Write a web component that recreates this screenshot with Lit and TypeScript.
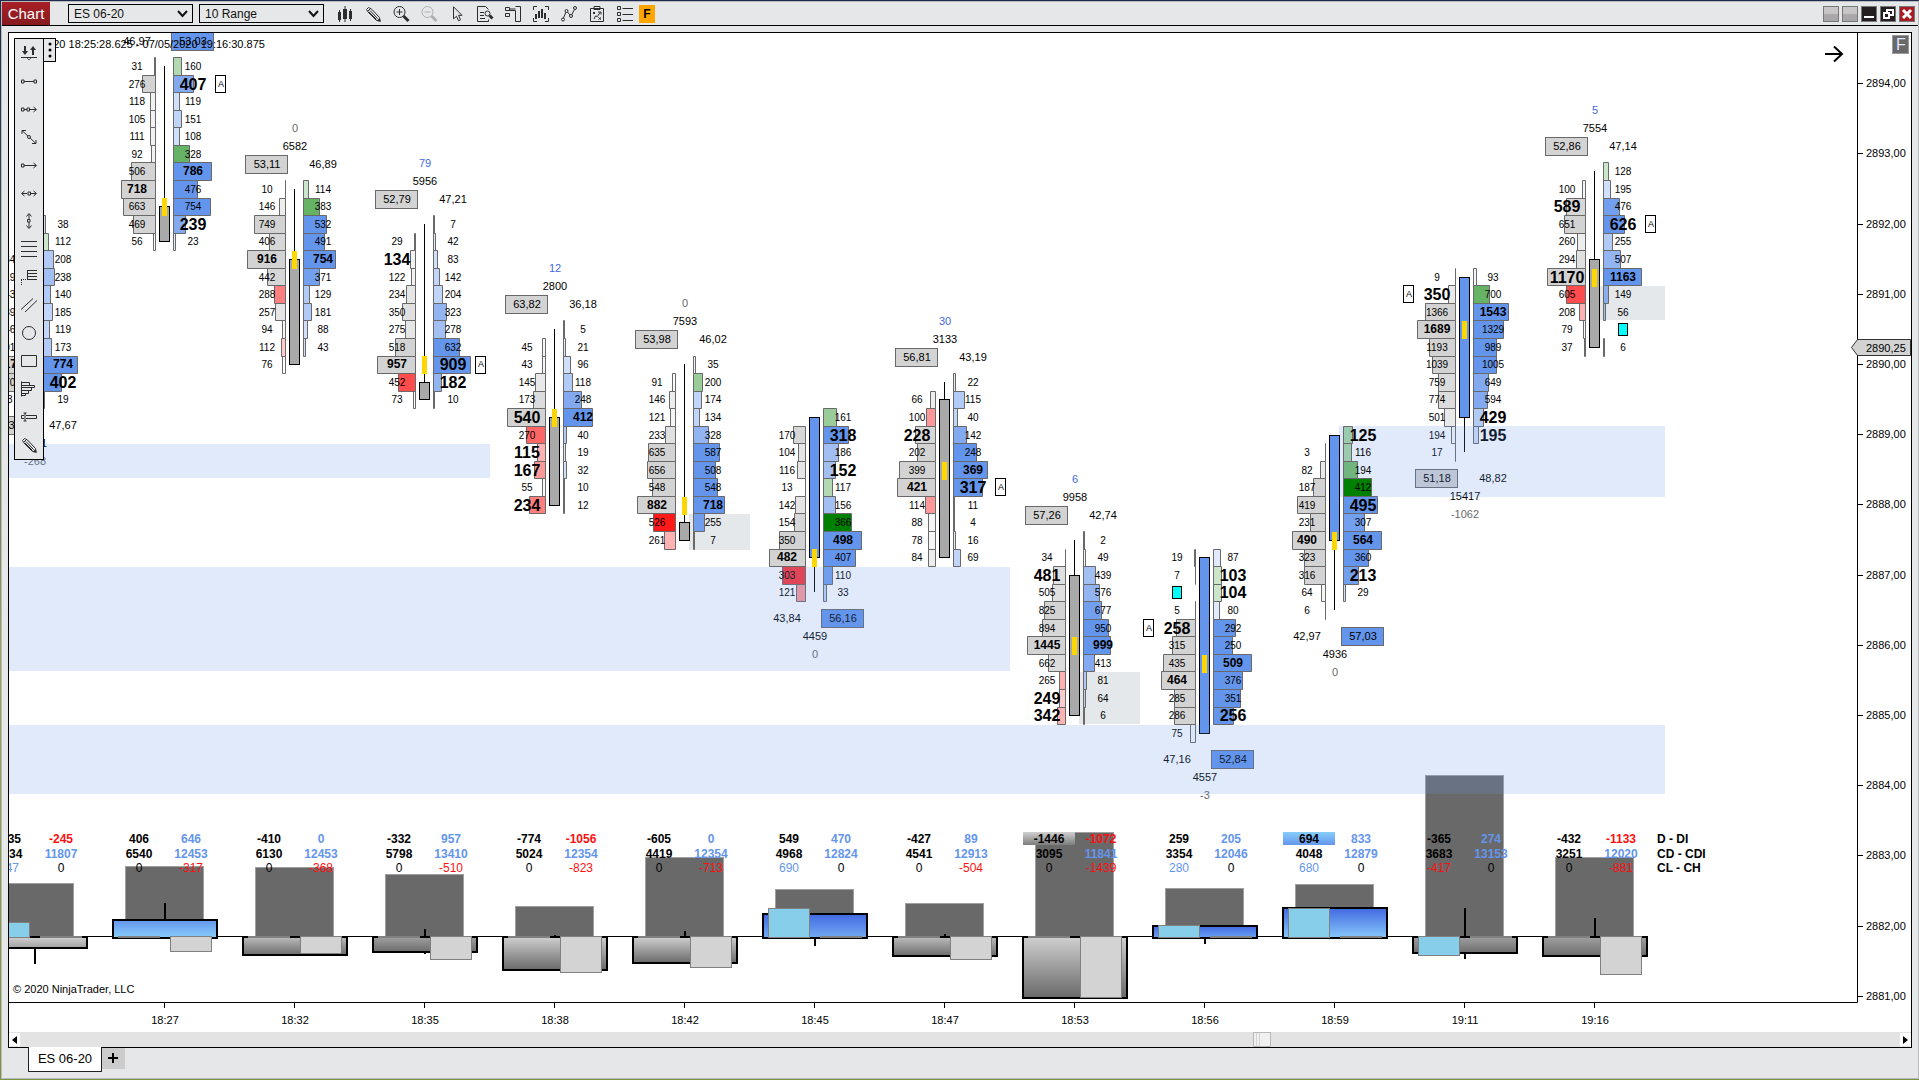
import { LitElement, html, svg, css } from "lit";
import { customElement } from "lit/decorators.js";

type Pair = [string, string];

interface Bar {
  time: string;
  x: number;
  /** tick index of the first row, counted down from 2894,00 */
  top: number;
  up: boolean;
  rows: string[];
  body: [number, number];
  wick: [number, number];
  poc: number;
  share: Pair;
  dominant: "L" | "R";
  volume: number;
  running: number;
  flag?: ["L" | "R", number];
  delta: Pair;
  cumulative: Pair;
  extremes: Pair;
  edge: number;
  tone: string;
  low: number;
  high: number;
  spikes: [number, number][];
  lit?: string;
}

const TICK = 17.55;
const ORIGIN = 83.5;
const ZERO = 936;
const tickY = (k: number) => Math.round(ORIGIN + k * TICK);
const rowTop = (k: number) => Math.round(ORIGIN + (k - 0.5) * TICK);

// Row cells: value, weight (B large, M medium), tint (g grey, r red, b blue, G green), strength 0-9 or x.
const BARS: Bar[] = [
  {
    time: "", x: 34, top: 8, up: true,
    rows: ["-|38b3", "-|112G2", "164g3|208b5", "219g4|238b6", "143g3|140b5", "189g4|185b4", "146g3|119b4", "101g2|173b5", "717Mgx|774Mbx", "870gx|402Bbx", "53g0|19b2"],
    body: [10, 17], wick: [8, 18], poc: 16, share: ["52,33", "47,67"], dominant: "L", volume: 5051, running: -268,
    delta: ["-235", "-245"], cumulative: ["6134", "11807"], extremes: ["147", "0"],
    edge: 949, tone: "n3", low: 922, high: 0, spikes: [[948, 964]],
  },
  {
    time: "18:27", x: 164, top: -1, up: false,
    rows: ["31g0|160G3", "276gx|407Bb8", "118g3|119b3", "105g3|151b4", "111g3|108b3", "92g3|328G6", "506gx|786Mbx", "718Mgx|476bx", "663gx|754bx", "469gx|239Bb8", "56g0|23b2"],
    body: [7, 9], wick: [-1, 7], poc: 7, share: ["46,97", "53,03"], dominant: "R", volume: 6696, running: 0,
    flag: ["R", 0], delta: ["406", "646"], cumulative: ["6540", "12453"], extremes: ["0", "-317"],
    edge: 919, tone: "p1", low: 0, high: 952, spikes: [[903, 920]],
  },
  {
    time: "18:32", x: 294, top: 6, up: false,
    rows: ["10g0|114G2", "146g4|383G6", "749gx|532bx", "406g9|491bx", "916Mgx|754Mbx", "442g9|371b9", "288r5|129b5", "257g6|181b5", "94g2|88b3", "112r2|43b3", "76g0|-"],
    body: [10, 16], wick: [6, 10], poc: 10, share: ["53,11", "46,89"], dominant: "L", volume: 6582, running: 0,
    delta: ["-410", "0"], cumulative: ["6130", "12453"], extremes: ["0", "-368"],
    edge: 956, tone: "n2", low: 0, high: 954, spikes: [],
  },
  {
    time: "18:35", x: 424, top: 8, up: false,
    rows: ["-|7b1", "29g0|42b2", "134Bg3|83b3", "122g3|142b4", "234g6|204b4", "350g7|323b7", "275g6|278b6", "518gx|632bx", "957Mgx|909Bbx", "452r7|182Bb7", "73g0|10b1"],
    body: [17, 18], wick: [8, 17], poc: 16, share: ["52,79", "47,21"], dominant: "L", volume: 5956, running: 79,
    flag: ["R", 16], delta: ["-332", "957"], cumulative: ["5798", "13410"], extremes: ["0", "-510"],
    edge: 953, tone: "n1", low: 0, high: 960, spikes: [[929, 937], [950, 954]],
  },
  {
    time: "18:38", x: 554, top: 14, up: false,
    rows: ["-|5b1", "45g2|21b2", "43g2|96b3", "145g5|118b5", "173g8|248b8", "540Bgx|412Mbx", "270r6|40b5", "115Br3|19b2", "167Br4|32b3", "55g1|10b1", "234Br5|12b1"],
    body: [19, 24], wick: [14, 19], poc: 19, share: ["63,82", "36,18"], dominant: "L", volume: 2800, running: 12,
    delta: ["-774", "-1056"], cumulative: ["5024", "12354"], extremes: ["0", "-823"],
    edge: 971, tone: "n0", low: 0, high: 973, spikes: [[935, 938]],
  },
  {
    time: "18:42", x: 684, top: 16, up: false,
    rows: ["-|35b1", "91g1|200G4", "146g4|174b4", "121g2|134b4", "233g7|328b7", "635gx|587bx", "656gx|508bx", "548gx|548bx", "882Mgx|718Mbx", "526r9|255b9", "261r3|7b1"],
    body: [25, 26], wick: [16, 25], poc: 24, share: ["53,98", "46,02"], dominant: "L", volume: 7593, running: 0,
    delta: ["-605", "0"], cumulative: ["4419", "12354"], extremes: ["0", "-713"],
    edge: 964, tone: "n0", low: 0, high: 968, spikes: [[931, 938]],
  },
  {
    time: "18:45", x: 814, top: 19, up: true,
    rows: ["-|161G4", "170g9|318Bbx", "104g6|186b6", "116g6|152Bb6", "13g0|117G3", "142g6|156b6", "154g9|366Gx", "350gx|498Mbx", "482Mgx|407bx", "303r8|110b9", "121r4|33b4"],
    body: [19, 27], wick: [27, 29], poc: 27, share: ["43,84", "56,16"], dominant: "R", volume: 4459, running: 0,
    delta: ["549", "470"], cumulative: ["4968", "12824"], extremes: ["690", "0"],
    edge: 913, tone: "p2", low: 908, high: 0, spikes: [[938, 946]],
  },
  {
    time: "18:47", x: 944, top: 17, up: false,
    rows: ["-|22b2", "66g4|115b5", "100r4|40b4", "228Bg9|142b8", "202gx|248bx", "399gx|369Mbx", "421Mgx|317Bbx", "114r4|11b1", "88g2|4b1", "78g2|16b2", "84g4|69b4"],
    body: [18, 27], wick: [17, 18], poc: 22, share: ["56,81", "43,19"], dominant: "L", volume: 3133, running: 30,
    flag: ["R", 23], delta: ["-427", "89"], cumulative: ["4541", "12913"], extremes: ["0", "-504"],
    edge: 957, tone: "n2", low: 0, high: 960, spikes: [[934, 938]],
  },
  {
    time: "18:53", x: 1074, top: 26, up: false,
    rows: ["-|2b1", "34g0|49b1", "481Bg7|439b6", "505g7|576b7", "825gx|677b9", "894g9|950bx", "1445Mgx|999Mbx", "662g8|413b8", "265r3|81b4", "249Br2|64b3", "342Br3|6b1"],
    body: [28, 36], wick: [26, 28], poc: 32, share: ["57,26", "42,74"], dominant: "L", volume: 9958, running: 6,
    delta: ["-1446", "-1072"], cumulative: ["3095", "11841"], extremes: ["0", "-1439"],
    edge: 999, tone: "n0", low: 0, high: 998, spikes: [], lit: "litDown",
  },
  {
    time: "18:56", x: 1204, top: 27, up: true,
    rows: ["19g0|87b2", "7g0|103BG2", "*|104BG2", "5g0|80b2", "258Bgx|292bx", "315gx|250bx", "435gx|509Mbx", "464Mgx|376bx", "285gx|351bx", "286gx|256Bbx", "75g1|-"],
    body: [27, 37], wick: [27, 37], poc: 33, share: ["47,16", "52,84"], dominant: "R", volume: 4557, running: -3,
    flag: ["L", 31], delta: ["259", "205"], cumulative: ["3354", "12046"], extremes: ["280", "0"],
    edge: 925, tone: "p3", low: 925, high: 0, spikes: [[938, 944]],
  },
  {
    time: "18:59", x: 1334, top: 20, up: true,
    rows: ["-|125BG3", "3g0|116G3", "82g5|194G5", "187gx|412Gx", "419gx|495Bbx", "231gx|307b9", "490Mgx|564Mbx", "323gx|360bx", "316gx|213Bb9", "64g2|29b3", "6g0|-"],
    body: [20, 26], wick: [26, 30], poc: 26, share: ["42,97", "57,03"], dominant: "R", volume: 4936, running: 0,
    delta: ["694", "833"], cumulative: ["4048", "12879"], extremes: ["680", "0"],
    edge: 907, tone: "p4", low: 908, high: 0, spikes: [], lit: "litUp",
  },
  {
    time: "19:11", x: 1464, top: 11, up: true,
    rows: ["9g0|93b1", "350Bg5|700G6", "1366gx|1543Mbx", "1689Mgx|1329bx", "1193gx|989bx", "1039gx|1005bx", "759g8|649b8", "774g8|594b8", "501g5|429Bb5", "194g1|195Bb3", "17g0|-"],
    body: [11, 19], wick: [19, 21], poc: 14, share: ["51,18", "48,82"], dominant: "L", volume: 15417, running: -1062,
    flag: ["L", 12], delta: ["-365", "274"], cumulative: ["3683", "13153"], extremes: ["-417", "0"],
    edge: 954, tone: "n1", low: 956, high: 0, spikes: [[908, 938], [952, 959]],
  },
  {
    time: "19:16", x: 1594, top: 5, up: false,
    rows: ["-|128G2", "100g2|195b3", "589Bg9|476b9", "651gx|626Bbx", "260g4|255b5", "294g7|507b7", "1170Bgx|1163Mbx", "605r7|149b7", "208r3|56b5", "79g1|*", "37g0|6b1"],
    body: [10, 15], wick: [5, 10], poc: 11, share: ["52,86", "47,14"], dominant: "L", volume: 7554, running: 5,
    flag: ["R", 8], delta: ["-432", "-1133"], cumulative: ["3251", "12020"], extremes: ["0", "-881"],
    edge: 957, tone: "n1", low: 0, high: 975, spikes: [[918, 938]],
  },
];

const PRICES = Array.from({ length: 14 }, (_, i) => 2894 - i);

const GRADIENTS: [string, string, string][] = [
  ["p1", "#6495ed", "#87cefa"],
  ["p2", "#4169e1", "#72abf3"],
  ["p3", "#4169e1", "#6aa2f2"],
  ["p4", "#4169e1", "#87c8fa"],
  ["n0", "#cfcfcf", "#696969"],
  ["n1", "#a0a0a0", "#6c6c6c"],
  ["n2", "#bcbcbc", "#6c6c6c"],
  ["n3", "#d0d0d0", "#a0a0a0"],
  ["litDown", "#d0d0d0", "#7c7c7c"],
  ["litUp", "#87cefa", "#6495ed"],
];

const TINTS: Record<string, string> = { g: "#d3d3d3", r: "#ff0000", b: "#6495ed", G: "#008000" };

const cell = (b: Bar, side: "L" | "R", token: string, k: number, max: number) => {
  const cx = b.x + (side === "L" ? -27 : 29);
  const mid = tickY(k);
  if (token === "-") return svg``;
  if (token === "*") return svg`<rect class="cyan" x=${cx - 4.5} y=${mid - 5.5} width="9" height="12"/>`;
  const [, num, weight, tint, level] = /^(\d+)([BM]?)([grbG])([\dx])$/.exec(token)!;
  const raw = (Number(num) / max) * 38;
  const x0 = side === "L" ? b.x - 8.5 : b.x + 9.5;
  const x1 = side === "L" ? x0 - Math.floor(raw) : x0 + Math.ceil(raw);
  const y0 = rowTop(k) + 0.5;
  const y1 = rowTop(k + 1) + 0.5;
  const alpha = level === "x" ? 1 : Number(level) / 10;
  return svg`<path class="cell" fill=${TINTS[tint]} fill-opacity=${alpha} d="M${x0} ${y0}H${x1}V${y1}H${x0}Z"/>
    <text class=${weight === "B" ? "big" : weight === "M" ? "mid" : "num"} x=${cx} y=${mid + (weight === "B" ? 6 : 4)}>${num}</text>`;
};

// One bid/ask ladder with its candle, share box and totals
const footprint = (b: Bar) => {
  const pairs = b.rows.map((r) => r.split("|"));
  const max = Math.max(...pairs.flat().map((t) => parseInt(t, 10) || 0));
  const base = b.up ? rowTop(b.top + b.rows.length) : Math.floor(ORIGIN + (b.top - 0.5) * TICK);
  const boxY = b.up ? base + 8.5 : base - 24.5;
  const shareY = b.up ? base + 21 : base - 12;
  const volY = b.up ? base + 39 : base - 30;
  const runY = b.up ? base + 57 : base - 48;
  const boxX = b.dominant === "L" ? b.x - 48.5 : b.x + 7.5;
  const [o, c] = b.body;
  return svg`
    ${pairs.map(([l, r], i) => [cell(b, "L", l, b.top + i, max), cell(b, "R", r, b.top + i, max)])}
    <rect class="ink" x=${b.x} y=${tickY(b.wick[0])} width="1" height=${tickY(b.wick[1]) - tickY(b.wick[0])}/>
    <rect class=${b.up ? "candle rise" : "candle"} x=${b.x - 4.5} y=${tickY(o) + 0.5} width="10" height=${tickY(c) - tickY(o)}/>
    <rect class="poc" x=${b.x - 2} y=${tickY(b.poc) - 8} width="5" height="18"/>
    <rect class="share" fill=${b.dominant === "L" ? "#d3d3d3" : "#6495ed"} x=${boxX} y=${boxY} width="42" height="18"/>
    <text class="label" x=${b.x - 27} y=${shareY}>${b.share[0]}</text>
    <text class="label" x=${b.x + 29} y=${shareY}>${b.share[1]}</text>
    <text class="label" x=${b.x + 1} y=${volY}>${b.volume}</text>
    <text class=${b.running > 0 ? "label gain" : "label flat"} x=${b.x + 1} y=${runY}>${b.running}</text>
    ${b.flag
      ? svg`<rect class="flag" x=${b.flag[0] === "L" ? b.x - 60.5 : b.x + 51.5} y=${rowTop(b.flag[1]) + 0.5} width="10" height="17"/>
        <text class="tiny" x=${b.flag[0] === "L" ? b.x - 55 : b.x + 57} y=${tickY(b.flag[1]) + 3}>A</text>`
      : ""}`;
};

const histogram = (b: Bar) => {
  const tall = Math.floor(b.volume / 96.3);
  const rising = b.edge < ZERO;
  const top = rising ? b.edge + 1 : ZERO + 1;
  const height = rising ? ZERO + 2 - top : b.edge - 1 - top;
  const box = (x: number, edge: number, kind: string) => {
    if (!edge) return svg`<rect class="nil" x=${x} y=${ZERO} width="42" height="2"/>`;
    const y = edge < ZERO ? edge + 0.5 : ZERO + 0.5;
    return svg`<rect class=${kind} x=${x + 0.5} y=${y} width="41" height=${edge < ZERO ? ZERO + 1.5 - y : edge - 0.5 - y}/>`;
  };
  return svg`
    <rect class="vol" x=${b.x - 38.5} y=${ZERO - tall - 0.5} width="78" height=${tall + 1}/>
    ${b.spikes.map(([a, z]) => svg`<rect class="ink" x=${b.x} y=${a} width="2" height=${z - a}/>`)}
    <rect class="delta" fill="url(#${b.tone})" x=${b.x - 51} y=${top} width="104" height=${height}/>
    ${box(b.x - 46, b.low, "lowBox")}${box(b.x + 6, b.high, "highBox")}`;
};

const sign = (v: string) => (v.startsWith("-") ? "loss" : "blue");
const totals = (b: Bar) => svg`
  ${b.lit ? svg`<rect fill="url(#${b.lit})" x=${b.x - 51} y="832" width="52" height="13"/>` : ""}
  <text class="sum" x=${b.x - 25} y="843">${b.delta[0]}</text>
  <text class="sum ${sign(b.delta[1])}" x=${b.x + 27} y="843">${b.delta[1]}</text>
  <text class="sum" x=${b.x - 25} y="858">${b.cumulative[0]}</text>
  <text class="sum ${sign(b.cumulative[1])}" x=${b.x + 27} y="858">${b.cumulative[1]}</text>
  ${b.extremes.map((v, i) => svg`<text class="ext ${v === "0" ? "" : sign(v)}" x=${b.x + (i ? 27 : -25)} y="872">${v}</text>`)}`;

const pencil = svg`<path d="M1.500 3.500l2-2 3 1.500 8 8.500 .8 3.800-3.800-.8L3 6z"/><path d="M3 5l2.500-2.500M5 4.500l7.500 8M4 6l7.500 7.500"/><path class="solid" d="M15.500 15.500l-3.500-1 2.500-2.500z"/>`;

const TOOLS: [string, unknown][] = [
  ["Chart style", svg`<path class="solid" d="M1 6h3v8H1zM6 3h4v10H6zM12 5h3v8h-3z"/><path d="M2.500 4v12M8 0v16M13.500 3v12"/>`],
  ["Drawing tools", pencil],
  ["Zoom in", svg`<circle cx="6.500" cy="6" r="5.500"/><path d="M3.500 6h6M6.500 3v6"/><path class="thick" d="M10.500 10l5 5"/>`],
  ["Zoom out", svg`<g class="dim"><circle cx="6.500" cy="6" r="5.500"/><path d="M3.500 6h6"/><path class="thick" d="M10.500 10l5 5"/></g>`],
  ["Cursor", svg`<path d="M4.500 .800v12l3-2.500 2 4.500 2-1-2-4.500h3.500z"/>`],
  ["Data box", svg`<path d="M11.500 3.500L8.500.500H.500v15h11v-2"/><path d="M3 6.500h4M3 9.500h4M3 12.500h5"/><circle cx="10.500" cy="7.500" r="2.500"/><path class="thick" d="M12.500 9.500l3 3"/>`],
  ["Chart trader", svg`<path d="M.500 1.500h4v3h-4zM.500 7.500h4v3h-4zM4.500 3h6M10.500 .500h5v15h-5V4.500H4.500"/>`],
  ["Indicators", svg`<path d="M.500 4V.500H4M12 .500h3.500V4M15.500 12v3.500H12M4 15.500H.500V12"/><path class="wide" d="M3 8v5M6 5v7M9 3v9M12 7v6"/>`],
  ["Strategies", svg`<path d="M2 13L5.500 5 10 10l4-7.500"/><circle class="hole" cx="2" cy="13.500" r="1.500"/><circle class="hole" cx="5.500" cy="5" r="1.500"/><circle class="hole" cx="10" cy="10" r="1.500"/><circle class="hole" cx="14" cy="2" r="1.500"/>`],
  ["Strategy performance", svg`<path d="M1.500 2.500h13v13h-13zM5 .500h6v3H5z"/><path d="M4 6l2 2M6 6L4 8M9.500 11.500l2.500 2M12 11.500l-2.500 2M5 13l1.500-3 2 .500L11 6.500M9 6h3v2.500"/>`],
  ["Properties", svg`<path d="M.500 .500h3v3h-3zM.500 6.500h3v3h-3zM.500 12.500h3v3h-3zM5.500 2.500H16M5.500 8.500H16M5.500 14.500H16"/>`],
];

const DRAW: [string, unknown][] = [
  ["Snap mode", svg`<path class="solid" d="M3 1h2v5h2L4 10 1 6h2zM11 10h2V5h2l-3-4-3 4h2z"/><path d="M0 12.500h16"/><path d="M6.500 12.500v1l1 1h1l1-1v-1"/>`],
  ["Line", svg`<path d="M3 8.500h10M.500 7h2.500v3H.500zM13 7h2.500v3H13z"/>`],
  ["Ray", svg`<path d="M3 8.500h3M9 8.500h6M.500 7h2.500v3H.500zM6 7h2.500v3H6zM12.500 6l3 2.500-3 2.500"/>`],
  ["Extended line", svg`<path d="M1 1.500l14 13M1 5V1.500h4M15 11v3.500h-4"/><circle class="hole" cx="8" cy="8" r="1.500"/>`],
  ["Arrow line", svg`<path d="M3 8.500h12M.500 7h2.500v3H.500zM12.500 6l3 2.500-3 2.500"/>`],
  ["Horizontal line", svg`<path d="M1 8.500h5M10 8.500h5M7 7h2.500v3H7zM3.500 6L.500 8.500l3 2.500M12.500 6l3 2.500-3 2.500"/>`],
  ["Vertical line", svg`<path d="M8 1v5M8 9v6M6.500 6.500H9v2.500H6.500zM5.500 3.500L8 .500l2.500 3M5.500 12.500L8 15.500l2.500-3"/>`],
  ["Fibonacci levels", svg`<path d="M0 .500h16M0 5.500h16M0 10.500h16M0 15.500h16"/>`],
  ["Fibonacci extensions", svg`<path d="M6 1.500h10M6 4.500h10M6 7.500h10M6 10.500h10M6.500 1v10"/><path stroke-dasharray="1 1" d="M0 10.500h6M.500 11v5"/>`],
  ["Andrews pitchfork", svg`<path d="M0 12.500L12 1.500M4 15L16 3.500"/>`],
  ["Ellipse", svg`<circle cx="8" cy="8" r="6.500"/>`],
  ["Rectangle", svg`<path d="M.500 2.500h15v11H.500z"/>`],
  ["Volume profile", svg`<path d="M.500 .500v15M.500 1.500h8v3M.500 4.500h13v2H.500M10.500 6.500v3H.500M7.500 9.500v3H.500M4.500 12.500v2H.500"/>`],
  ["Range ruler", svg`<path d="M5 6.500h10.500v3H5M3 6.500H.500v3H3M4 4v8M2.500 4h3M2.500 12h3"/>`],
  ["Freehand", pencil],
];

@customElement("app-root")
export class AppRoot extends LitElement {
  static styles = css`
    :host {
      display: block;
      box-sizing: border-box;
      height: 100vh;
      padding: 1px 0 1px 1px;
      background: linear-gradient(#1d2a4d, #3f5a4b 30%, #99a35c 60%, #7c9440);
      font-family: "Liberation Sans", Arial, sans-serif;
      font-size: 12px;
      color: #000;
    }
    * { box-sizing: border-box; }
    .window {
      display: flex;
      flex-direction: column;
      height: 100%;
      border: 1px solid #b9babc;
      background: #e6e7e8;
    }
    .bar {
      display: flex;
      align-items: center;
      height: 24px;
      flex: none;
      border-bottom: 1px solid #000;
    }
    .brand {
      align-self: stretch;
      display: flex;
      align-items: center;
      justify-content: center;
      width: 48px;
      margin-right: 18px;
      background: linear-gradient(#a82027, #861a1f);
      color: #fff;
      font-size: 15px;
    }
    .pick {
      display: grid;
      width: 125px;
      height: 19px;
      margin-right: 6px;
    }
    .pick > * { grid-area: 1 / 1; }
    .pick select {
      appearance: none;
      width: 100%;
      height: 100%;
      padding: 0 20px 0 5px;
      border: 1px solid #000;
      border-radius: 0;
      background: #e6e7e8;
      font: 12px "Liberation Sans", Arial, sans-serif;
      color: #111;
    }
    .pick svg {
      justify-self: end;
      align-self: center;
      margin-right: 5px;
      fill: none;
      stroke: #111;
      stroke-width: 2;
      pointer-events: none;
    }
    .tools {
      display: flex;
      align-items: center;
      gap: 12px;
      margin-left: 7px;
    }
    button {
      display: grid;
      place-items: center;
      padding: 0;
      border: 0;
      background: none;
      font: inherit;
      color: inherit;
    }
    .icon {
      width: 16px;
      height: 16px;
      overflow: visible;
      fill: none;
      stroke: #2d2d2d;
      stroke-width: 1;
    }
    .icon .solid { fill: #2d2d2d; stroke: none; }
    .icon .thick { stroke-width: 3; }
    .icon .wide { stroke-width: 2; }
    .icon .hole { fill: #e6e7e8; }
    .icon .dim { stroke: #b0b0b0; }
    .fbtn {
      width: 16px;
      height: 18px;
      margin-left: 6px;
      background: #ffa500;
      font-weight: bold;
    }
    .controls {
      display: flex;
      gap: 3px;
      margin-left: auto;
      margin-right: 3px;
    }
    .controls button {
      width: 16px;
      height: 16px;
      border: 1px solid #777;
      background: linear-gradient(#c8c6c7 45%, #a9a7a8 55%);
    }
    .controls .dark { background: #231f20; }
    .controls .close { background: #a51c22; }
    .controls svg { width: 14px; height: 14px; fill: none; stroke: #fff; stroke-width: 2; }
    .panel {
      position: relative;
      display: flex;
      flex-direction: column;
      flex: 1;
      min-height: 0;
      margin: 6px 6px 0;
      border: 1px solid #000;
      background: #fff;
    }
    .chart { display: block; flex: 1; min-height: 0; width: 100%; }
    .chart text { text-anchor: middle; font-size: 11px; }
    .chart .start { text-anchor: start; }
    .chart .num { font-size: 10px; }
    .chart .tiny { font-size: 9px; }
    .chart .mid { font-size: 12px; font-weight: bold; }
    .chart .big { font-size: 16px; font-weight: bold; }
    .chart .sum { font-size: 12px; font-weight: bold; }
    .chart .ext { font-size: 12px; }
    .chart .flat { fill: #696969; }
    .chart .gain { fill: #4169e1; }
    .chart .loss { fill: #ff1010; }
    .chart .blue { fill: #6495ed; }
    .cell { stroke: #696969; }
    .candle { fill: #a9a9a9; stroke: #000; }
    .rise { fill: #6495ed; }
    .poc { fill: #ffd700; }
    .share { stroke: #696969; }
    .flag { fill: #fff; stroke: #000; }
    .cyan { fill: #00ffff; stroke: #000; }
    .vol { fill: #696969; stroke: #a0a0a0; }
    .delta { stroke: #000; stroke-width: 2; }
    .lowBox { fill: #87ceeb; stroke: #808080; }
    .highBox { fill: #d3d3d3; stroke: #808080; }
    .nil { fill: #808080; }
    .zone { fill: #6495ed; fill-opacity: 0.2; }
    .shade { fill: #e4e8ea; }
    .rule { fill: none; stroke: #000; }
    .arrow { fill: none; stroke: #000; stroke-width: 2; }
    .last { fill: #d3d3d3; stroke: #333; }
    .fixed { fill: #696969; stroke: #999; }
    .chart .fixedText { fill: #dfe6ff; font-size: 16px; }
    .palette {
      position: absolute;
      left: 5px;
      top: 5px;
      display: flex;
      align-items: flex-start;
    }
    .strip {
      display: grid;
      grid-auto-rows: 28px;
      width: 30px;
      border: 1px solid #000;
      background: #e6e7e8;
    }
    .grip {
      width: 12px;
      height: 24px;
      border: 1px solid #000;
      border-left: 0;
      background: #e6e7e8;
    }
    .scroll {
      display: flex;
      align-items: center;
      flex: none;
      height: 15px;
      background: #e3e3e3;
    }
    .scroll button { width: 11px; height: 13px; background: #fff; }
    .scroll input {
      appearance: none;
      flex: 1;
      min-width: 0;
      height: 15px;
      margin: 0;
      background: none;
    }
    .scroll input::-webkit-slider-thumb {
      appearance: none;
      width: 18px;
      height: 15px;
      border: 1px solid #b8b8b8;
      background: linear-gradient(90deg, #f0f0f0 2px, #d4d4d4 2px 3px, #f0f0f0 3px 5px, #d4d4d4 5px 6px, #f0f0f0 6px);
    }
    .tabs {
      display: flex;
      align-items: flex-start;
      flex: none;
      height: 30px;
      padding-left: 26px;
    }
    .tab {
      position: relative;
      width: 74px;
      height: 25px;
      margin-top: -1px;
      padding-bottom: 2px;
      border: 1px solid #222;
      border-top: 0;
      background: #fff;
      font-size: 13px;
    }
    .add { width: 23px; height: 21px; background: #ccc; }
  `;

  private icon(shape: unknown) {
    return html`<svg class="icon" viewBox="0 0 16 16" aria-hidden="true">${shape}</svg>`;
  }

  private pick(label: string, value: string) {
    return html`<label class="pick"><select aria-label=${label}><option>${value}</option></select>
      <svg width="11" height="8" viewBox="0 0 11 8" aria-hidden="true"><path d="M1 1l4.500 5L10 1"/></svg></label>`;
  }

  render() {
    // The 18:59 ladder sits above the price zones, the others below them
    const above = BARS.filter((b) => b.time === "18:59");
    const below = BARS.filter((b) => b.time !== "18:59");
    return html`
      <main class="window">
        <header class="bar">
          <div class="brand">Chart</div>
          ${this.pick("Instrument", "ES 06-20")}${this.pick("Interval", "10 Range")}
          <div class="tools">${TOOLS.map(([n, s]) => html`<button aria-label=${n}>${this.icon(s)}</button>`)}</div>
          <button class="fbtn">F</button>
          <div class="controls">
            <button aria-label="Link instrument"></button>
            <button aria-label="Link interval"></button>
            <button class="dark" aria-label="Minimize"><svg viewBox="0 0 14 14"><path d="M2 10h10"/></svg></button>
            <button class="dark" aria-label="Restore"><svg viewBox="0 0 14 14"><path d="M6 5V3h6v5h-3M3 6h5v5H3z"/></svg></button>
            <button class="close" aria-label="Close"><svg viewBox="0 0 14 14"><path stroke-width="3" d="M3 3l8 8M11 3l-8 8"/></svg></button>
          </div>
        </header>

        <section class="panel">
          <svg class="chart" viewBox="9 33 1902 999" preserveAspectRatio="xMinYMin meet">
            <defs>
              ${GRADIENTS.map(([id, a, z]) => svg`<linearGradient id=${id} x1="0" y1="0" x2="0" y2="1"><stop offset="0" stop-color=${a}/><stop offset="1" stop-color=${z}/></linearGradient>`)}
            </defs>
            <rect class="shade" x="689" y="514" width="61" height="36"/>
            <rect class="shade" x="1079" y="672" width="61" height="52"/>
            <rect class="shade" x="1600" y="286" width="65" height="34"/>
            <rect class="ink" x="9" y="936" width="1639" height="1"/>
            ${BARS.map(histogram)}
            ${BARS.map(totals)}
            ${below.map(footprint)}
            <rect class="zone" x="9" y="444" width="481" height="34"/>
            <rect class="zone" x="9" y="567" width="1001" height="104"/>
            <rect class="zone" x="9" y="725" width="1656" height="69"/>
            <rect class="zone" x="1339" y="426" width="326" height="71"/>
            ${above.map(footprint)}
            <text class="sum start" x="1657" y="843">D - DI</text>
            <text class="sum start" x="1657" y="858">CD - CDI</text>
            <text class="sum start" x="1657" y="872">CL - CH</text>
            <text class="start" x="41" y="48">2020 18:25:28.625 - 07/05/2020 19:16:30.875</text>
            <text class="start" x="13" y="993">© 2020 NinjaTrader, LLC</text>
            <path class="arrow" d="M1825 54h17M1834 46.500l8 7.500-8 7.500"/>
            <path class="rule" d="M9 1002.500H1857.500V33"/>
            ${BARS.filter((b) => b.time).map((b) => svg`<path class="rule" d="M${b.x + 0.5} 1002v6"/><text x=${b.x + 1} y="1024">${b.time}</text>`)}
            ${PRICES.map((p) => {
              const y = Math.round(ORIGIN + (2894 - p) * 4 * TICK - 0.3);
              return svg`<path class="rule" d="M1858 ${y + 0.5}h5"/><text class="start" x="1866" y=${y + 4}>${p},00</text>`;
            })}
            <path class="last" d="M1851.500 347.500l6-8H1910.500v16H1857.500z"/>
            <text class="start" x="1866" y="352">2890,25</text>
            <rect class="fixed" x="1892.500" y="35.500" width="16" height="18"/>
            <text class="fixedText" x="1901" y="50">F</text>
          </svg>
          <div class="scroll">
            <button aria-label="Scroll left"><svg width="5" height="8" viewBox="0 0 5 8"><path d="M5 0v8L0 4z"/></svg></button>
            <input type="range" min="0" max="1000" value="662" aria-label="Chart position" />
            <button aria-label="Scroll right"><svg width="5" height="8" viewBox="0 0 5 8"><path d="M0 0v8l5-4z"/></svg></button>
          </div>
          <div class="palette">
            <div class="strip">${DRAW.map(([n, s]) => html`<button aria-label=${n}>${this.icon(s)}</button>`)}</div>
            <button class="grip" aria-label="Move palette"><svg width="4" height="18" viewBox="0 0 4 18"><circle cx="2" cy="3" r="1.500"/><circle cx="2" cy="9" r="1.500"/><circle cx="2" cy="15" r="1.500"/></svg></button>
          </div>
        </section>

        <nav class="tabs">
          <button class="tab">ES 06-20</button>
          <button class="add" aria-label="Add tab"><svg width="11" height="11" viewBox="0 0 11 11"><path d="M4 0h2v4h4v2H6v4H4V6H0V4h4z"/></svg></button>
        </nav>
      </main>
    `;
  }
}
